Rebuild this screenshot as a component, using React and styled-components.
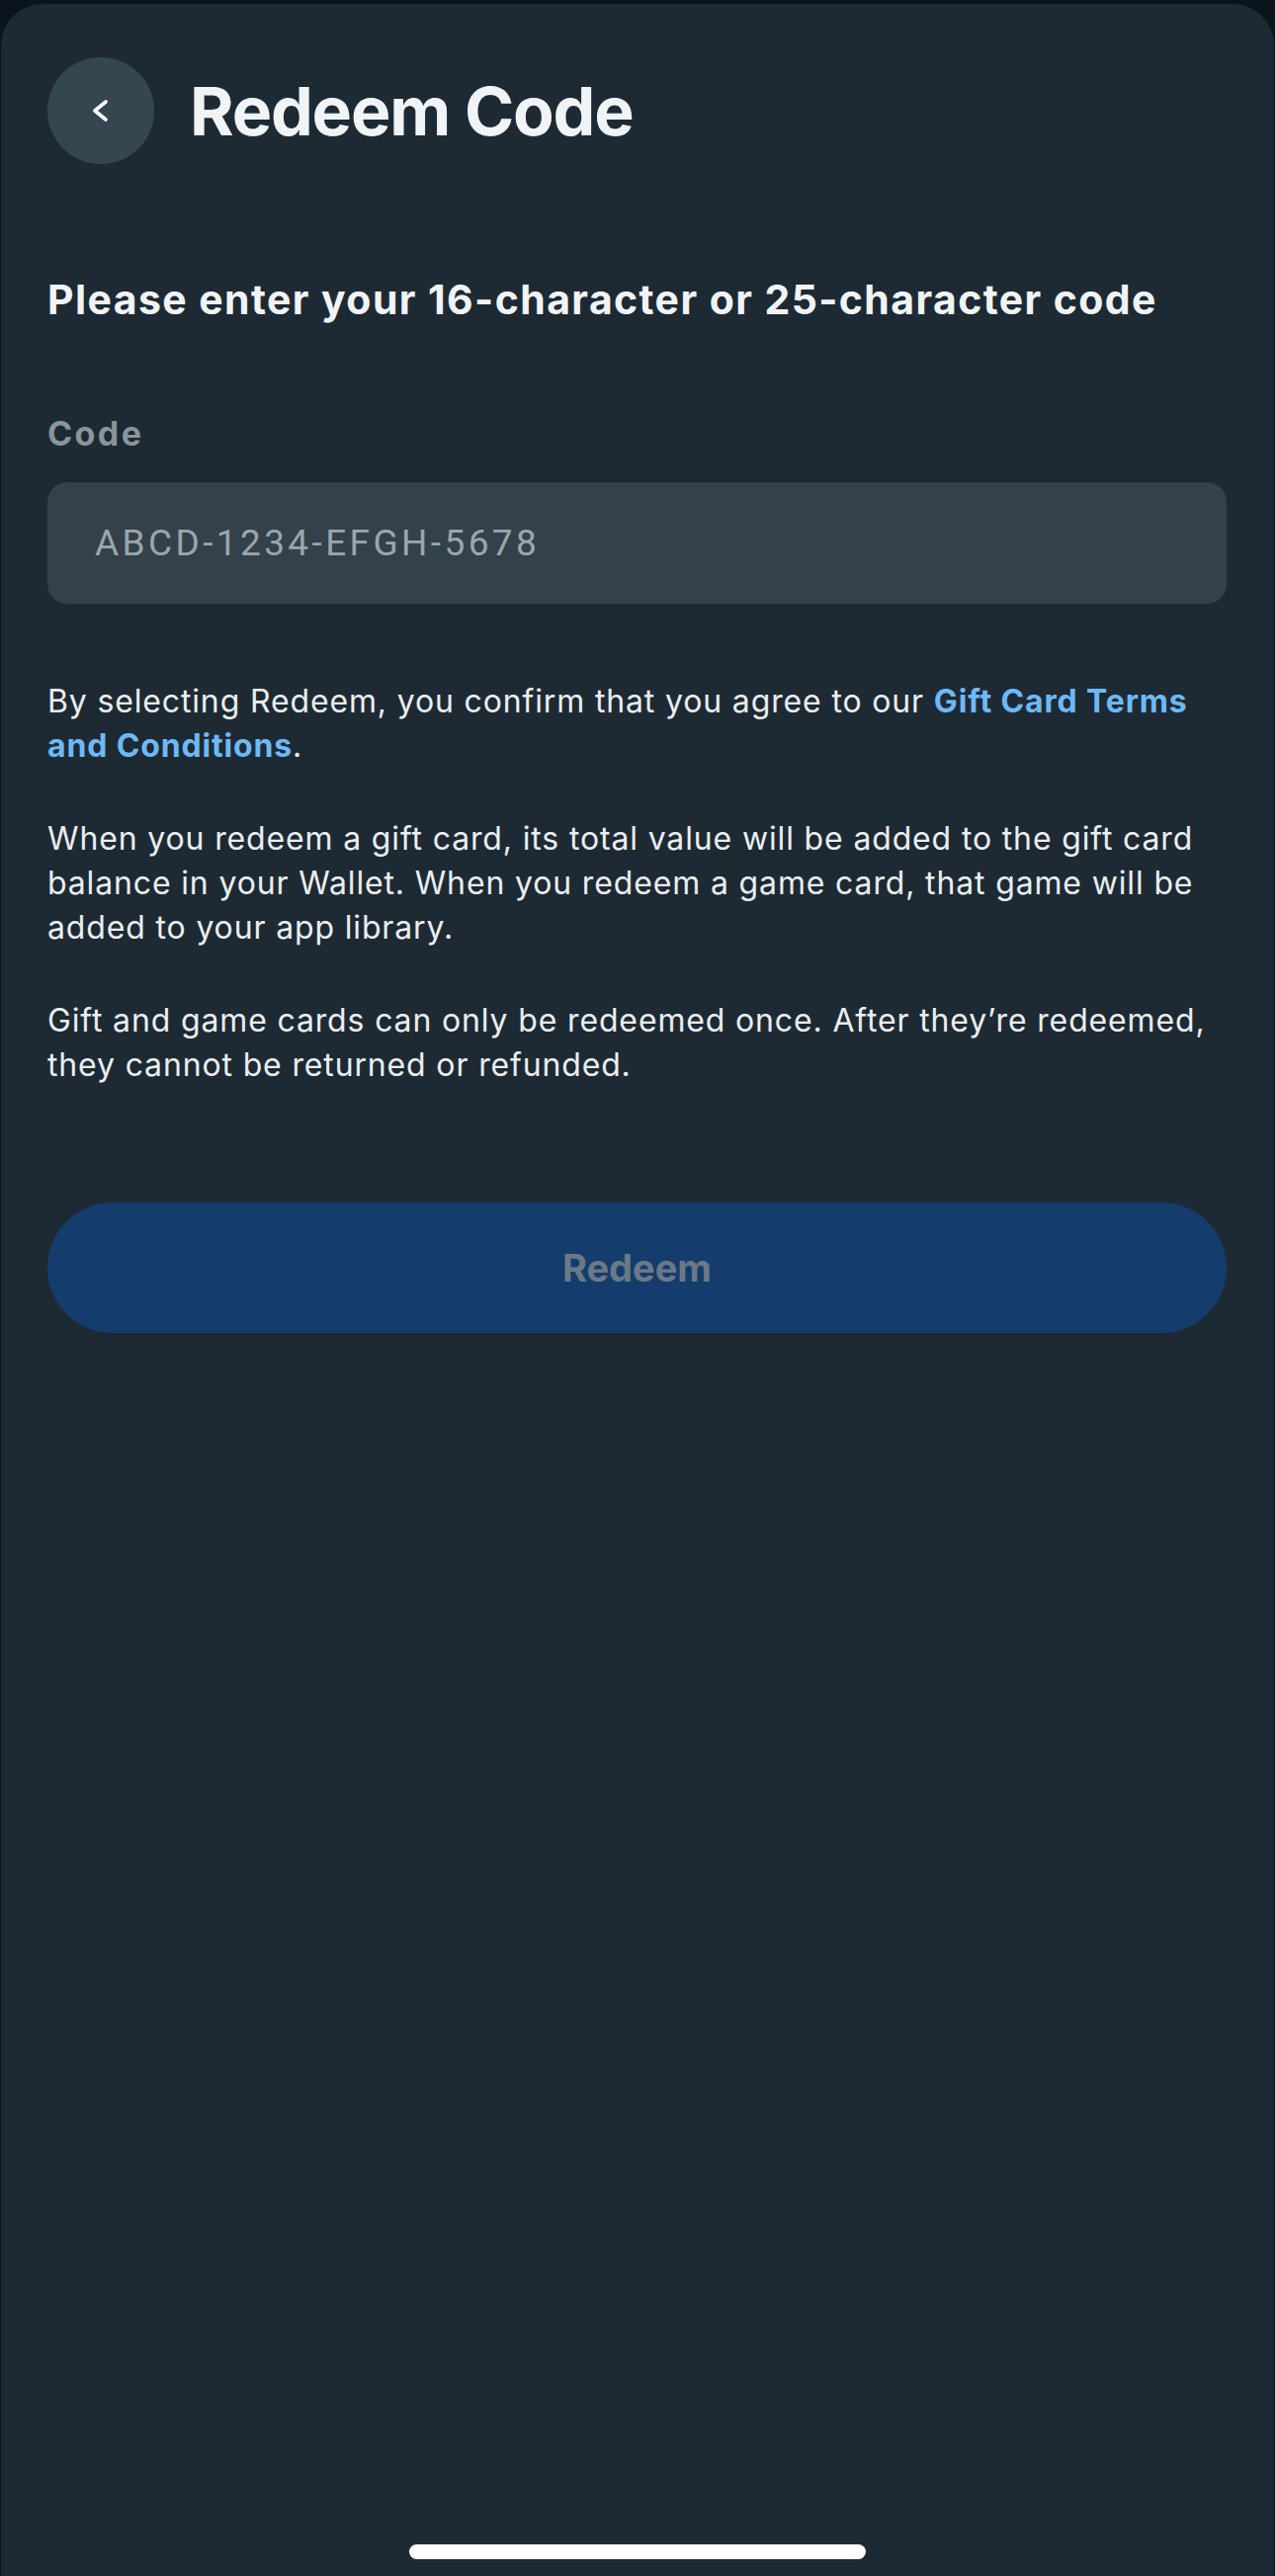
import React from "react";
import styled, { createGlobalStyle } from "styled-components";

const GlobalStyle = createGlobalStyle`
  html, body {
    margin: 0;
    padding: 0;
    background: #0b131c;
  }
  #root {
    min-height: 100vh;
  }
`;

const Screen = styled.div`
  display: flex;
  flex-direction: column;
  min-height: 100vh;
  padding: 4px 1px 0 1px;
  box-sizing: border-box;
`;

const Sheet = styled.div`
  flex: 1;
  display: flex;
  flex-direction: column;
  background: #1e2a33;
  border-radius: 42px 42px 0 0;
  padding: 54px 48px 17px 47px;
  font-family: Inter, "Noto Sans", sans-serif;
  color: #eef1f3;
`;

const Header = styled.div`
  display: flex;
  align-items: center;
  gap: 36px;
`;

const BackButton = styled.button`
  width: 108px;
  height: 108px;
  border-radius: 50%;
  border: none;
  padding: 0;
  background: #344751;
  display: flex;
  align-items: center;
  justify-content: center;
  cursor: pointer;
`;

const Title = styled.h1`
  margin: 0;
  font-size: 68px;
  line-height: 108px;
  font-weight: 700;
  letter-spacing: -1.2px;
  color: #f1f4f6;
`;

const Heading = styled.h2`
  margin: 111px 0 0;
  font-size: 41px;
  line-height: 52px;
  font-weight: 700;
  letter-spacing: 1.4px;
  color: #f1f4f6;
`;

const Label = styled.label`
  display: block;
  margin-top: 88px;
  font-size: 34px;
  line-height: 44px;
  font-weight: 700;
  letter-spacing: 2.4px;
  color: #8a949b;
`;

const Input = styled.input`
  margin-top: 27px;
  height: 123px;
  box-sizing: border-box;
  width: 100%;
  border: none;
  outline: none;
  border-radius: 20px;
  background: #33414b;
  padding: 0 48px;
  font-family: Roboto, "Liberation Sans", sans-serif;
  font-size: 37px;
  letter-spacing: 3.4px;
  color: #eef1f3;

  &::placeholder {
    color: #9ca5ac;
  }
`;

const Notes = styled.div`
  margin-top: 76px;
  display: flex;
  flex-direction: column;
  gap: 49px;
`;

const Paragraph = styled.p`
  margin: 0;
  font-size: 32px;
  line-height: 45px;
  font-weight: 400;
  letter-spacing: 0.85px;
  color: #eaeef1;
`;

const Link = styled.a`
  color: #6db9f6;
  font-weight: 700;
  text-decoration: none;
`;

const RedeemButton = styled.button`
  margin-top: 117px;
  height: 132px;
  width: 100%;
  border: none;
  border-radius: 66px;
  background: #143d6e;
  color: #6b7986;
  font-family: Inter, "Noto Sans", sans-serif;
  font-size: 38px;
  font-weight: 700;
`;

const HomeIndicator = styled.div`
  margin: auto auto 0;
  width: 462px;
  height: 15px;
  border-radius: 8px;
  background: #ffffff;
`;

const ChevronLeft = () => (
  <svg width="24" height="24" viewBox="0 0 24 24" fill="none">
    <polyline
      points="17,3 6,12 17,21"
      stroke="#ffffff"
      strokeWidth="3.6"
      strokeLinecap="round"
      strokeLinejoin="round"
    />
  </svg>
);

const App = () => (
  <>
    <GlobalStyle />
    <Screen>
      <Sheet>
        <Header>
          <BackButton aria-label="Back">
            <ChevronLeft />
          </BackButton>
          <Title>Redeem Code</Title>
        </Header>

        <Heading>Please enter your 16-character or 25-character code</Heading>

        <Label htmlFor="code">Code</Label>
        <Input id="code" placeholder="ABCD-1234-EFGH-5678" />

        <Notes>
          <Paragraph>
            By selecting Redeem, you confirm that you agree to our{" "}
            <Link href="#">Gift Card Terms and Conditions</Link>.
          </Paragraph>
          <Paragraph>
            When you redeem a gift card, its total value will be added to the
            gift card balance in your Wallet. When you redeem a game card, that
            game will be added to your app library.
          </Paragraph>
          <Paragraph>
            Gift and game cards can only be redeemed once. After they’re
            redeemed, they cannot be returned or refunded.
          </Paragraph>
        </Notes>

        <RedeemButton disabled>Redeem</RedeemButton>

        <HomeIndicator />
      </Sheet>
    </Screen>
  </>
);

export default App;
